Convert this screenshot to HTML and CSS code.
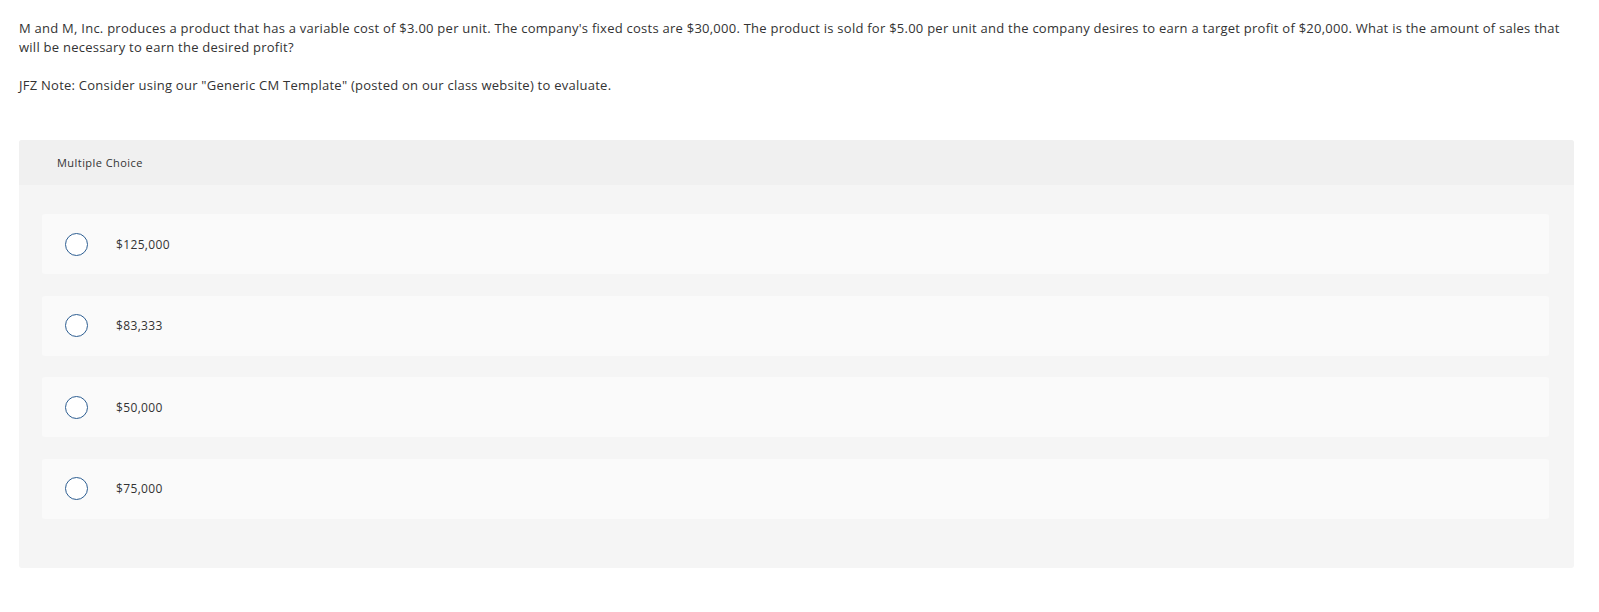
FILE: index.html
```html
<!DOCTYPE html>
<html lang="en">
<head>
<meta charset="utf-8">
<title>Multiple Choice</title>
<link rel="stylesheet" href="styles.css">
</head>
<body>
<div class="page">
  <div class="prompt">
    <p>M and M, Inc. produces a product that has a variable cost of $3.00 per unit. The company's fixed costs are $30,000. The product is sold for $5.00 per unit and the company desires to earn a target profit of $20,000. What is the amount of sales that will be necessary to earn the desired profit?</p>
    <p>JFZ Note: Consider using our "Generic CM Template" (posted on our class website) to evaluate.</p>
  </div>
  <div class="question">
    <div class="q-header">Multiple Choice</div>
    <div class="q-body">
      <div class="choice"><span class="radio"></span><span class="label">$125,000</span></div>
      <div class="choice"><span class="radio"></span><span class="label">$83,333</span></div>
      <div class="choice"><span class="radio"></span><span class="label">$50,000</span></div>
      <div class="choice"><span class="radio"></span><span class="label">$75,000</span></div>
    </div>
  </div>
</div>
</body>
</html>
```
FILE: styles.css
```css
html, body {
  margin: 0;
  padding: 0;
  background: #ffffff;
}
body {
  font-family: "Open Sans", "Liberation Sans", sans-serif;
  color: #333333;
}
.page {
  padding: 19px 25px 0 19px;
}
.prompt p {
  margin: 0;
  font-size: 13px;
  line-height: 19px;
  letter-spacing: 0.25px;
}
.prompt p + p {
  margin-top: 19px;
}
.question {
  margin-top: 45px;
  border-radius: 3px;
  overflow: hidden;
  background: #f5f5f5;
}
.q-header {
  background: #f0f0f0;
  height: 45px;
  display: flex;
  align-items: center;
  padding-left: 38px;
  font-size: 11px;
  letter-spacing: 0.45px;
  color: #333333;
}
.q-body {
  padding: 29px 25px 49px 23px;
  display: flex;
  flex-direction: column;
  gap: 21.5px;
}
.choice {
  height: 60px;
  background: #fafafa;
  border-radius: 3px;
  display: flex;
  align-items: center;
  padding-left: 23px;
}
.radio {
  width: 21px;
  height: 21px;
  border: 1.5px solid #2c5d91;
  border-radius: 50%;
  background: #ffffff;
  flex: none;
}
.label {
  margin-left: 28px;
  font-size: 12px;
  letter-spacing: 0.35px;
  color: #333333;
}
```
